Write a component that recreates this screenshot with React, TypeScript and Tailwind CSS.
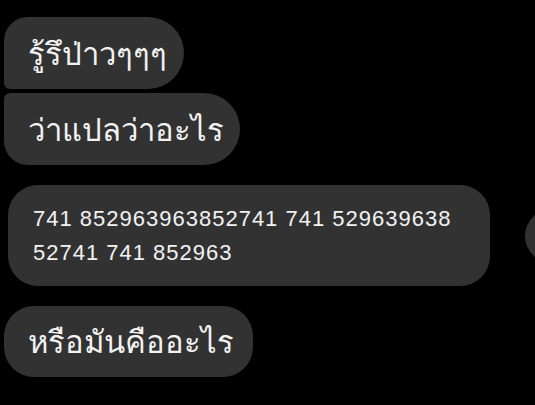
import React from 'react'

const bubble = 'bg-[#323232] text-[#f2f2f2] flex items-center shrink-0'

export default function App() {
  return (
    <div
      className="w-[535px] h-[405px] bg-black overflow-hidden relative"
      style={{ fontFamily: '"Noto Sans", "DejaVu Sans", sans-serif' }}
    >
      <div className="flex flex-col pt-[17px] pl-[4px]">
        <div
          className={`${bubble} w-[180px] h-[72px] pl-[24px] text-[31px] rounded-tl-[24px] rounded-bl-[6px] rounded-r-[36px]`}
        >
          รู้รึป่าวๆๆๆ
        </div>
        <div
          className={`${bubble} mt-[4px] w-[236px] h-[72px] pl-[24px] text-[31px] rounded-tl-[6px] rounded-bl-[24px] rounded-r-[36px]`}
        >
          ว่าแปลว่าอะไร
        </div>

        <div className="flex items-center mt-[20px] pl-[4px] w-[600px]">
          <div
            className={`${bubble} w-[482px] h-[101px] pl-[25px] rounded-[30px] text-[22px] tracking-[1px] leading-[34px] whitespace-nowrap`}
            style={{ fontFamily: '"Liberation Sans", sans-serif' }}
          >
            <div>
              741 852963963852741 741 529639638
              <br />
              52741 741 852963
            </div>
          </div>
          <div className="ml-[35px] w-[54px] h-[54px] shrink-0 rounded-full bg-[#323232]" />
        </div>

        <div
          className={`${bubble} mt-[20px] w-[249px] h-[71px] pl-[24px] text-[31px] rounded-[30px]`}
        >
          หรือมันคืออะไร
        </div>
      </div>
    </div>
  )
}
